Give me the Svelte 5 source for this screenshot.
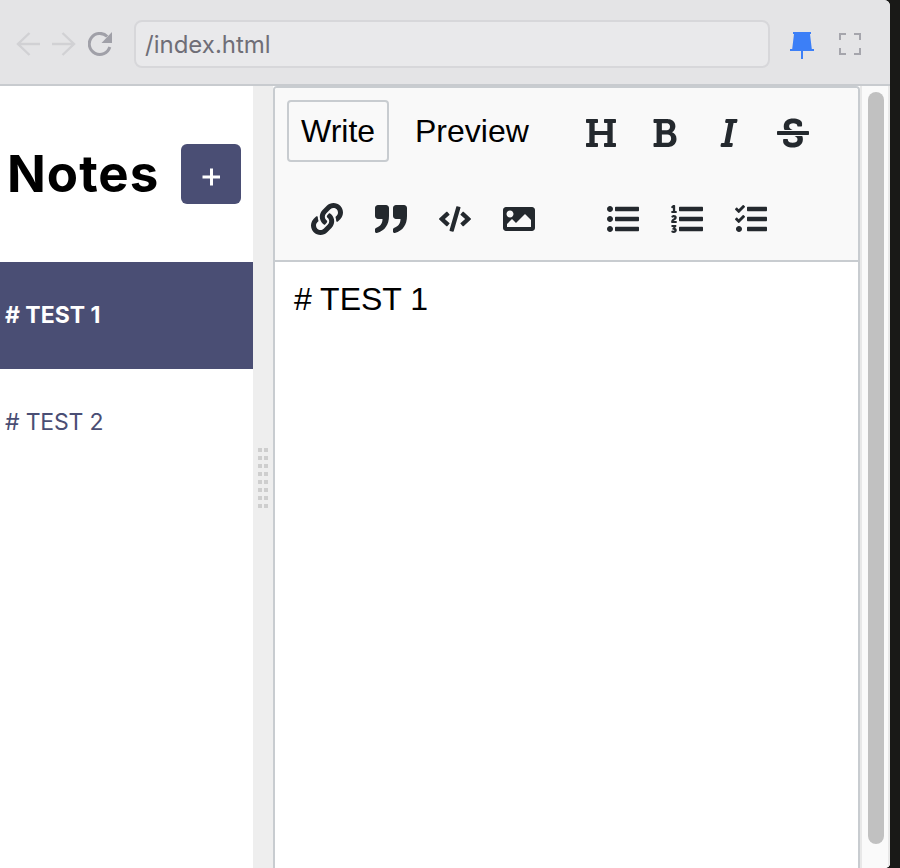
<script>
  const bars = (x, w) =>
    [60, 220, 380].map((y) => `M${x + 16} ${y + 72}h${w - 32}c8.8 0 16-7.2 16-16V${y + 16}c0-8.8-7.2-16-16-16H${x + 16}c-8.8 0-16 7.2-16 16v40c0 8.8 7.2 16 16 16z`).join('');

  const styleIcons = [
    { name: 'Heading', w: 512, d: 'M496 80V48c0-8.837-7.163-16-16-16H320c-8.837 0-16 7.163-16 16v32c0 8.837 7.163 16 16 16h37.621v128H154.379V96H192c8.837 0 16-7.163 16-16V48c0-8.837-7.163-16-16-16H32c-8.837 0-16 7.163-16 16v32c0 8.837 7.163 16 16 16h37.275v320H32c-8.837 0-16 7.163-16 16v32c0 8.837 7.163 16 16 16h160c8.837 0 16-7.163 16-16v-32c0-8.837-7.163-16-16-16h-37.621V288H357.62v128H320c-8.837 0-16 7.163-16 16v32c0 8.837 7.163 16 16 16h160c8.837 0 16-7.163 16-16v-32c0-8.837-7.163-16-16-16h-37.275V96H480c8.837 0 16-7.163 16-16z' },
    { name: 'Bold', w: 384, d: 'M304.793 243.891c33.639-18.537 53.657-54.16 53.657-95.693 0-48.236-26.25-87.626-68.626-104.179C265.138 34.01 240.849 32 209.661 32H24c-8.837 0-16 7.163-16 16v33.049c0 8.837 7.163 16 16 16h33.113v318.53H24c-8.837 0-16 7.163-16 16V464c0 8.837 7.163 16 16 16h195.69c24.203 0 44.834-1.289 66.866-7.584C337.52 457.193 376 410.647 376 350.014c0-52.168-26.573-91.684-71.207-106.123zM142.217 100.809h67.444c16.294 0 27.536 2.019 37.525 6.717 15.828 8.479 24.906 26.502 24.906 49.446 0 35.029-20.32 56.79-53.029 56.79h-76.846V100.809zm112.642 305.475c-10.14 4.056-22.677 4.907-31.409 4.907h-81.233V281.943h84.367c39.645 0 63.057 25.38 63.057 63.057.001 28.425-13.66 52.483-34.782 61.284z' },
    { name: 'Italic', w: 320, d: 'M204.758 416h-33.849l62.092-320h40.725a16 16 0 0 0 15.704-12.937l6.242-32C297.599 41.184 290.034 32 279.968 32H120.235a16 16 0 0 0-15.704 12.937l-6.242 32C96.362 86.816 103.927 96 113.993 96h33.846l-62.09 320H46.278a16 16 0 0 0-15.704 12.935l-6.245 32C22.402 470.815 29.967 480 40.034 480h158.479a16 16 0 0 0 15.704-12.935l6.245-32c1.927-9.88-5.638-19.065-15.704-19.065z' },
    { name: 'Strikethrough', w: 512, d: 'M496 288H16c-8.837 0-16-7.163-16-16v-32c0-8.837 7.163-16 16-16h480c8.837 0 16 7.163 16 16v32c0 8.837-7.163 16-16 16zm-214.666 16c27.258 12.937 46.524 28.683 46.524 56.243 0 33.108-28.977 53.676-75.621 53.676-32.325 0-76.874-12.08-76.874-44.271V368c0-8.837-7.164-16-16-16H113.75c-8.836 0-16 7.163-16 16v19.204c0 66.845 77.717 101.82 154.487 101.82 88.578 0 162.013-45.438 162.013-134.424 0-19.815-3.618-36.417-10.143-50.6H281.334zm-30.952-96c-32.422-13.505-56.836-28.946-56.836-59.683 0-33.92 30.901-47.406 64.962-47.406 42.647 0 64.962 16.593 64.962 32.985V136c0 8.837 7.164 16 16 16h45.613c8.836 0 16-7.163 16-16v-30.318c0-52.438-71.725-79.875-142.575-79.875-85.203 0-150.726 40.972-150.726 125.646 0 22.71 4.665 41.176 12.777 56.547h129.823z' }
  ];

  const insertIcons = [
    { name: 'Link', w: 512, d: 'M326.612 185.391c59.747 59.809 58.927 155.698.36 214.59-.11.12-.24.25-.36.37l-67.2 67.2c-59.27 59.27-155.699 59.262-214.96 0-59.27-59.26-59.27-155.7 0-214.96l37.106-37.106c9.84-9.84 26.786-3.3 27.294 10.606.648 17.722 3.826 35.527 9.69 52.721 1.986 5.822.567 12.262-3.783 16.612l-13.087 13.087c-28.026 28.026-28.905 73.66-1.155 101.96 28.024 28.579 74.086 28.749 102.325.51l67.2-67.19c28.191-28.191 28.073-73.757 0-101.83-3.701-3.694-7.429-6.564-10.341-8.569a16.037 16.037 0 0 1-6.947-12.606c-.396-10.567 3.348-21.456 11.698-29.806l21.054-21.055c5.521-5.521 14.182-6.199 20.584-1.731a152.482 152.482 0 0 1 20.522 17.197zM467.547 44.449c-59.261-59.262-155.69-59.27-214.96 0l-67.2 67.2c-.12.12-.25.25-.36.37-58.566 58.892-59.387 154.781.36 214.59a152.454 152.454 0 0 0 20.521 17.196c6.402 4.468 15.064 3.789 20.584-1.731l21.054-21.055c8.35-8.35 12.094-19.239 11.698-29.806a16.037 16.037 0 0 0-6.947-12.606c-2.912-2.005-6.64-4.875-10.341-8.569-28.073-28.073-28.191-73.639 0-101.83l67.2-67.19c28.239-28.239 74.3-28.069 102.325.51 27.75 28.3 26.872 73.934-1.155 101.96l-13.087 13.087c-4.35 4.35-5.769 10.79-3.783 16.612 5.864 17.194 9.042 34.999 9.69 52.721.509 13.906 17.454 20.446 27.294 10.606l37.106-37.106c59.271-59.259 59.271-155.699.001-214.959z' },
    { name: 'Quote', w: 512, d: 'M512 80v128c0 137.018-63.772 236.324-193.827 271.172-15.225 4.08-30.173-7.437-30.173-23.199v-33.895c0-10.057 6.228-19.133 15.687-22.55C369.684 375.688 408 330.054 408 256h-72c-26.51 0-48-21.49-48-48V80c0-26.51 21.49-48 48-48h128c26.51 0 48 21.49 48 48zM176 32H48C21.49 32 0 53.49 0 80v128c0 26.51 21.49 48 48 48h72c0 74.054-38.316 119.688-104.313 143.528C6.228 402.945 0 412.021 0 422.078v33.895c0 15.762 14.948 27.279 30.173 23.199C160.228 444.324 224 345.018 224 208V80c0-26.51-21.49-48-48-48z' },
    { name: 'Code', w: 640, d: 'M278.9 511.5l-61-17.7c-6.4-1.8-10-8.5-8.2-14.9L346.2 8.7c1.8-6.4 8.5-10 14.9-8.2l61 17.7c6.4 1.8 10 8.5 8.2 14.9L293.8 503.3c-1.9 6.4-8.5 10.1-14.9 8.2zm-114-112.2l43.5-46.4c4.6-4.9 4.3-12.7-.8-17.2L117 256l90.6-79.7c5.1-4.5 5.5-12.3.8-17.2l-43.5-46.4c-4.5-4.8-12.1-5.1-17-.5L3.8 247.2c-5.1 4.7-5.1 12.8 0 17.5l144.1 135.1c4.9 4.6 12.5 4.4 17-.5zm327.2.6l144.1-135.1c5.1-4.7 5.1-12.8 0-17.5L492.1 112.1c-4.8-4.5-12.4-4.3-17 .5L431.6 159c-4.6 4.9-4.3 12.7.8 17.2L523 256l-90.6 79.7c-5.1 4.5-5.5 12.3-.8 17.2l43.5 46.4c4.5 4.9 12.1 5.1 17 .6z' },
    { name: 'Image', w: 512, d: 'M464 448H48c-26.51 0-48-21.49-48-48V112c0-26.51 21.49-48 48-48h416c26.51 0 48 21.49 48 48v288c0 26.51-21.49 48-48 48zM112 120c-30.928 0-56 25.072-56 56s25.072 56 56 56 56-25.072 56-56-25.072-56-56-56zM64 384h384V272l-87.515-87.515c-4.686-4.686-12.284-4.686-16.971 0L208 320l-55.515-55.515c-4.686-4.686-12.284-4.686-16.971 0L64 336v48z' }
  ];

  const listIcons = [
    { name: 'Unordered list', w: 512, d: 'M96 96c0 26.51-21.49 48-48 48S0 122.51 0 96s21.49-48 48-48 48 21.49 48 48zM48 208c-26.51 0-48 21.49-48 48s21.49 48 48 48 48-21.49 48-48-21.49-48-48-48zm0 160c-26.51 0-48 21.49-48 48s21.49 48 48 48 48-21.49 48-48-21.49-48-48-48z' + bars(128, 384) },
    { name: 'Ordered list', w: 512, d: 'M3.263 139.527c0-7.477 3.917-11.572 11.573-11.572h15.131V88.078c0-5.163.534-10.503.534-10.503h-.356s-1.779 2.67-2.848 3.738c-4.451 4.273-10.504 4.451-15.666-1.068l-5.518-6.231c-5.342-5.341-4.984-11.216.534-16.379l21.72-19.938C32.815 33.602 36.732 32 42.785 32H54.89c7.656 0 11.749 3.916 11.749 11.572v84.384h15.488c7.655 0 11.572 4.094 11.572 11.572v8.901c0 7.477-3.917 11.572-11.572 11.572H14.836c-7.656 0-11.573-4.095-11.573-11.572v-8.902zM2.211 304.591c0-47.278 50.955-56.383 50.955-69.165 0-7.18-5.954-8.755-9.28-8.755-3.153 0-6.479 1.051-9.455 3.852-5.079 4.903-10.507 7.004-16.111 2.451l-8.579-6.829c-5.779-4.553-7.18-9.805-2.803-15.409C13.592 201.981 26.025 192 47.387 192c19.437 0 44.476 10.506 44.476 39.573 0 38.347-46.753 46.402-48.679 56.909h39.049c7.529 0 11.557 4.027 11.557 11.382v8.755c0 7.354-4.028 11.382-11.557 11.382h-67.94c-7.005 0-12.083-4.028-12.083-11.382v-4.028zM5.654 454.61l5.603-9.28c3.853-6.654 9.105-7.004 15.584-3.152 4.903 2.101 9.63 3.152 14.359 3.152 10.155 0 14.358-3.502 14.358-8.23 0-6.654-5.604-9.106-15.934-9.106h-4.728c-5.954 0-9.28-2.101-12.258-7.88l-1.05-1.926c-2.451-4.728-1.226-9.806 2.801-14.884l5.604-7.004c6.829-8.405 12.257-13.483 12.257-13.483v-.35s-4.203 1.051-12.608 1.051H16.685c-7.53 0-11.383-4.028-11.383-11.382v-8.755c0-7.53 3.853-11.382 11.383-11.382h58.484c7.529 0 11.382 4.027 11.382 11.382v3.327c0 5.778-1.401 9.806-5.079 14.183l-17.509 20.137c19.611 4.728 28.716 20.487 28.716 34.845 0 21.363-14.358 43.126-48.503 43.126-16.636 0-28.192-4.728-35.896-9.455-5.779-4.202-6.304-9.805-2.626-15.934z' + bars(128, 384) },
    { name: 'Checklist', w: 512, d: 'M64 368c-26.5 0-48.6 21.5-48.6 48s22.1 48 48.6 48 48-21.5 48-48-21.5-48-48-48zm92.5-299l-72.2 72.2-15.6 15.6c-4.7 4.7-12.9 4.7-17.6 0L3.5 109.4c-4.7-4.7-4.7-12.3 0-17l15.7-15.7c4.7-4.7 12.3-4.7 17 0l22.7 22.1 63.7-63.3c4.7-4.7 12.3-4.7 17 0l17 16.5c4.6 4.7 4.6 12.3-.1 17zm0 159.6l-72.2 72.2-15.7 15.7c-4.7 4.7-12.9 4.7-17.6 0L3.5 269c-4.7-4.7-4.7-12.3 0-17l15.7-15.7c4.7-4.7 12.3-4.7 17 0l22.7 22.1 63.7-63.7c4.7-4.7 12.3-4.7 17 0l17 17c4.6 4.6 4.6 12.2-.1 16.9z' + bars(192, 320) }
  ];

  const notes = ['# TEST 1', '# TEST 2'];
  let current = $state(0);
</script>

{#snippet group(icons)}
  <div class="group">
    {#each icons as icon}
      <button class="tool" aria-label={icon.name}>
        <svg viewBox="0 0 {icon.w} 512" width="32" height="32"><path d={icon.d} /></svg>
      </button>
    {/each}
  </div>
{/snippet}

<div class="screen">
  <div class="window">
    <header class="browser">
      <div class="nav">
        <svg width="24" height="24" viewBox="0 0 24 24"><path d="M24 12H2M13.500 1L2 12l11.500 11" /></svg>
        <svg width="24" height="24" viewBox="0 0 24 24"><path d="M0 12H22M10.500 1L22 12l-11.500 11" /></svg>
        <svg class="reload" width="24" height="24" viewBox="0 0 24 24">
          <path class="ring" d="M21.800 15A10.500 10.500 0 1 1 19.200 4.500" />
          <path class="head" d="M24 0v11H13.500z" />
        </svg>
      </div>
      <div class="address">/index.html</div>
      <svg class="pin" width="24" height="28" viewBox="0 0 24 28">
        <path d="M3 0h18v2h-1l1.800 15H24v2H13v8h-2v-8H0v-2h2.200L4 2H3z" />
      </svg>
      <svg class="expand" width="22" height="22" viewBox="0 0 22 22">
        <path d="M1 7V1h6M15 1h6v6M21 15v6h-6M7 21H1v-6" />
      </svg>
    </header>

    <main>
      <aside>
        <div class="title">
          <h1>Notes</h1>
          <button class="add" aria-label="Add note">
            <svg width="18" height="18" viewBox="0 0 18 18"><path d="M9.500 .5v17M.5 9h17.500" /></svg>
          </button>
        </div>
        {#each notes as note, i}
          <button class="note" class:active={current === i} onclick={() => (current = i)}>{note}</button>
        {/each}
      </aside>

      <div class="gutter">
        <div class="grip">
          {#each Array(16) as _}<i></i>{/each}
        </div>
      </div>

      <section class="editor">
        <div class="toolbar">
          <div class="tabs">
            <button class="tab selected">Write</button>
            <button class="tab">Preview</button>
          </div>
          {@render group(styleIcons)}
          {@render group(insertIcons)}
          {@render group(listIcons)}
        </div>
        <div class="text">{notes[current]}</div>
      </section>

      <div class="track"><div class="thumb"></div></div>
    </main>
  </div>
</div>

<style>
  .screen { width: 900px; height: 868px; background: #191917; overflow: hidden; }
  .screen * { box-sizing: border-box; }
  .window { width: 890px; height: 868px; background: #fff; border-radius: 0 6px 5px 0; overflow: hidden; display: flex; flex-direction: column; }
  button { border: 0; margin: 0; padding: 0; background: none; color: inherit; font: inherit; }
  svg { display: block; flex: none; }

  .browser { height: 86px; flex: none; background: #e4e4e6; border-bottom: 2px solid #c8cbcf; display: flex; align-items: center; padding: 4px 28px 0 16px; }
  .nav { display: flex; align-items: center; gap: 12px; width: 118px; flex: none; }
  .nav path { fill: none; stroke: #d1d1d4; stroke-width: 2.4; }
  .nav .reload .ring { stroke: #a0a0a8; stroke-width: 3; }
  .nav .reload .head { stroke: none; fill: #a0a0a8; }
  .address { width: 636px; height: 48px; border: 2px solid #d7d7da; border-radius: 8px; background: #e9e9eb; padding: 1px 0 0 9px; font: 24px/44px Inter, "Liberation Sans", sans-serif; color: #6f6e77; }
  .pin { margin: 4px 0 0 20px; }
  .pin path { fill: #3c7ff7; }
  .expand { margin-left: 25px; }
  .expand path { fill: none; stroke: #a5a5ac; stroke-width: 2; }

  main { flex: 1; display: flex; min-height: 0; background: #fff; }
  aside { width: 253px; flex: none; font-family: Inter, "Liberation Sans", sans-serif; }
  .title { height: 176px; display: flex; align-items: center; justify-content: space-between; padding: 0 12px 0 7px; }
  h1 { margin: 0; font-size: 51px; font-weight: 700; line-height: 60px; letter-spacing: 1px; }
  .add { width: 60px; height: 60px; border-radius: 6px; background: #4a4e74; display: flex; align-items: center; justify-content: center; padding-top: 5px; }
  .add path { stroke: #fff; stroke-width: 3; }
  .note { display: block; width: 100%; height: 107px; text-align: left; padding: 0 0 2px 5px; font-size: 23px; letter-spacing: -0.2px; color: #4a4e74; }
  .note.active { background: #4a4e74; color: #fff; font-weight: 700; letter-spacing: 0; }

  .gutter { width: 20px; flex: none; background: #eee; display: flex; align-items: center; justify-content: center; }
  .grip { width: 10px; display: grid; grid-template-columns: 4px 4px; gap: 4px 2px; margin-top: 2px; }
  .grip i { height: 4px; background: #cecece; }

  .editor { width: 587px; flex: none; border: 2px solid #c8ccd0; border-bottom: 0; border-radius: 4px 4px 0 0; display: flex; flex-direction: column; font-family: "Liberation Sans", Arial, sans-serif; font-size: 32px; color: #000; overflow: hidden; }
  .toolbar { height: 174px; flex: none; background: #f9f9f9; border-bottom: 2px solid #c8ccd0; display: flex; flex-wrap: wrap; align-content: flex-start; padding: 12px 0 0 12px; }
  .tabs { display: flex; width: 282px; height: 88px; align-items: flex-start; }
  .tab { height: 62px; padding: 0 12px; border: 2px solid transparent; border-radius: 4px; line-height: 58px; }
  .tab.selected { width: 102px; border-color: #c8ccd0; }
  .tab + .tab { margin-left: 12px; }
  .group { display: flex; width: 272px; height: 86px; padding-top: 2px; }
  .group + .group { width: 296px; padding-left: 8px; padding-top: 0; }
  .group + .group + .group { width: 272px; }
  .tool { width: 64px; height: 62px; display: flex; align-items: center; justify-content: center; }
  .tool path { fill: #24292e; }
  .text { padding: 17px 19px; line-height: 40px; }

  .track { width: 30px; flex: none; background: #fafafa; border: solid #e8e8e8; border-width: 0 2px; padding: 6px 0 24px 6px; }
  .thumb { width: 16px; height: 100%; border-radius: 8px; background: #c1c1c1; }
</style>
